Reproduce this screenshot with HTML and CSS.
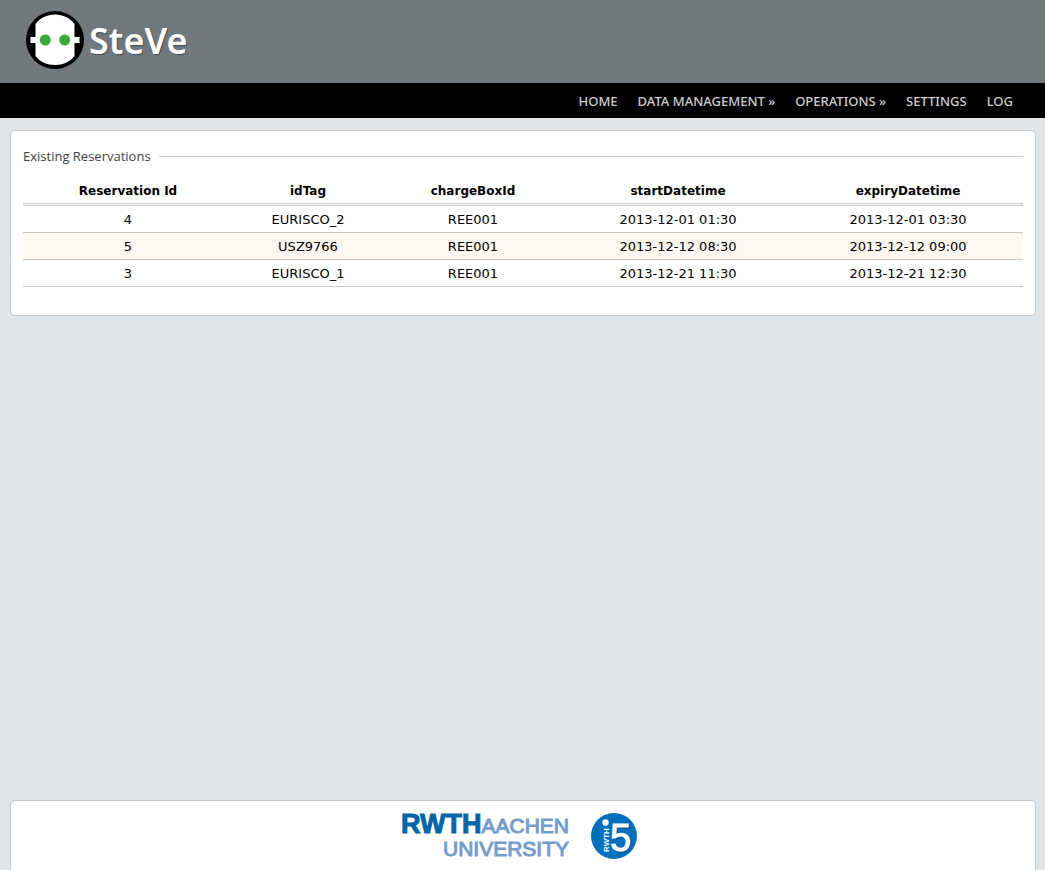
FILE: index.html
```html
<!DOCTYPE html>
<html lang="en">
<head>
<meta charset="utf-8">
<title>SteVe - Existing Reservations</title>
<link rel="stylesheet" href="styles.css">
</head>
<body>
<header class="banner">
  <a class="brand" href="#">
    <svg class="brand-mark" viewBox="0 0 58 58" aria-hidden="true">
      <circle cx="29" cy="29" r="29" fill="#000"/>
      <path fill="#fff" d="M9.500 13C14 7 21 3.500 29 3.500S44 7 48.500 13V26H53.500V32H48.500V45C44 51 37 54 29 54S14 51 9.500 45V32H4.500V26H9.500Z"/>
      <circle cx="19.300" cy="29" r="5.500" fill="#3aaa35"/>
      <circle cx="38.700" cy="29" r="5.500" fill="#3aaa35"/>
    </svg>
    <span class="brand-name">SteVe</span>
  </a>
</header>
<nav class="menu">
  <ul class="menu-list">
    <li><a href="#">HOME</a></li>
    <li><a href="#">DATA MANAGEMENT »</a></li>
    <li><a href="#">OPERATIONS »</a></li>
    <li><a href="#">SETTINGS</a></li>
    <li><a href="#">LOG</a></li>
  </ul>
</nav>
<main class="panel content">
  <h1 class="section-title">Existing Reservations</h1>
  <table class="reservations">
    <colgroup><col class="col-id"><col class="col-tag"><col class="col-box"><col class="col-date"><col class="col-date"></colgroup>
    <thead>
      <tr><th>Reservation Id</th><th>idTag</th><th>chargeBoxId</th><th>startDatetime</th><th>expiryDatetime</th></tr>
    </thead>
    <tbody>
      <tr><td>4</td><td>EURISCO_2</td><td>REE001</td><td>2013-12-01 01:30</td><td>2013-12-01 03:30</td></tr>
      <tr><td>5</td><td>USZ9766</td><td>REE001</td><td>2013-12-12 08:30</td><td>2013-12-12 09:00</td></tr>
      <tr><td>3</td><td>EURISCO_1</td><td>REE001</td><td>2013-12-21 11:30</td><td>2013-12-21 12:30</td></tr>
    </tbody>
  </table>
</main>
<footer class="panel footer">
  <a class="university" href="#">
    <span class="university-line"><b class="rwth">RWTH</b><span>AACHEN</span></span>
    <span class="university-line">UNIVERSITY</span>
  </a>
  <a class="chair" href="#" aria-label="RWTH i5">
    <svg class="chair-mark" viewBox="0 0 46 46">
      <circle cx="23" cy="23" r="23" fill="#0070bb"/>
      <circle cx="14.500" cy="9.500" r="3.200" fill="#fff"/>
      <text class="chair-rwth" transform="translate(17.500 39) rotate(-90)">RWTH</text>
      <text class="chair-five chair-shade" x="20" y="39">5</text>
      <text class="chair-five" x="19" y="38">5</text>
    </svg>
  </a>
</footer>
</body>
</html>
```
FILE: styles.css
```css
* { box-sizing: border-box; }

body {
  display: flex;
  flex-direction: column;
  min-height: 100vh;
  margin: 0;
  background: #e0e5e9;
  color: #000;
  font: 13px/16px Verdana, "DejaVu Sans", sans-serif;
}

a { color: inherit; text-decoration: none; }

.banner {
  display: flex;
  padding: 11px 26px 14px;
  background: #72797c;
}

.brand { display: flex; align-items: center; gap: 5px; }
.brand-mark { width: 58px; height: 58px; }

.brand-name {
  padding-top: 2px;
  color: #fff;
  font: 600 36px/56px "Noto Sans", "Open Sans", sans-serif;
  text-shadow: 1px 1px 1px #444a4d;
}

.menu { background: #000; }

.menu-list {
  display: flex;
  flex-wrap: wrap;
  justify-content: flex-end;
  gap: 0 20px;
  margin: 0;
  padding: 2px 32px 0;
  list-style: none;
  color: #ccc;
  font: 500 13px/33px "Noto Sans", sans-serif;
}

.menu-list a { display: block; }

.panel {
  margin: 0 9px 0 10px;
  border: 1px solid #c8c8c8;
  border-radius: 5px;
  background: #fff;
}

.content { margin-top: 12px; padding: 16px 12px 28px; }

.section-title {
  display: flex;
  align-items: center;
  gap: 8px;
  margin: 0 0 12px;
  color: #444;
  font: 13px/18px "Open Sans", sans-serif;
}

.section-title::after { content: ""; flex: 1; height: 1px; background: #c8c8c8; }

.reservations { width: 100%; border-collapse: collapse; text-align: center; }
.col-id { width: 21%; }
.col-tag { width: 15%; }
.col-box { width: 18%; }
.col-date { width: 23%; }
.reservations th { padding: 6px 5px 4px; border-bottom: 3px double #c8c8c8; font-size: 12px; }
.reservations td { padding: 6px 5px 4px; border-bottom: 1px solid #c8c8c8; }
.reservations tbody tr:nth-child(even) { background: #fdf9f1; }

.footer {
  display: flex;
  justify-content: center;
  gap: 22px;
  margin-top: auto;
  padding: 12px 20px 10px 12px;
  border-bottom: 0;
  border-radius: 5px 5px 0 0;
}

.university {
  display: flex;
  flex-direction: column;
  align-items: flex-end;
  color: #759dcb;
  font: 21px/23px "Liberation Sans", sans-serif;
  -webkit-text-stroke: 1px currentColor;
}

.university-line { display: flex; align-items: baseline; }
.rwth { color: #0066a8; font: bold 27px/23px "Liberation Sans", sans-serif; }

.chair-mark { display: block; width: 46px; height: 46px; }
.chair-rwth { fill: #fff; font: bold 8px "Liberation Sans", sans-serif; }
.chair-five { fill: #fff; stroke: #fff; font: 38px "Liberation Sans", sans-serif; }
.chair-shade { fill: #004d85; stroke: #004d85; }
```
